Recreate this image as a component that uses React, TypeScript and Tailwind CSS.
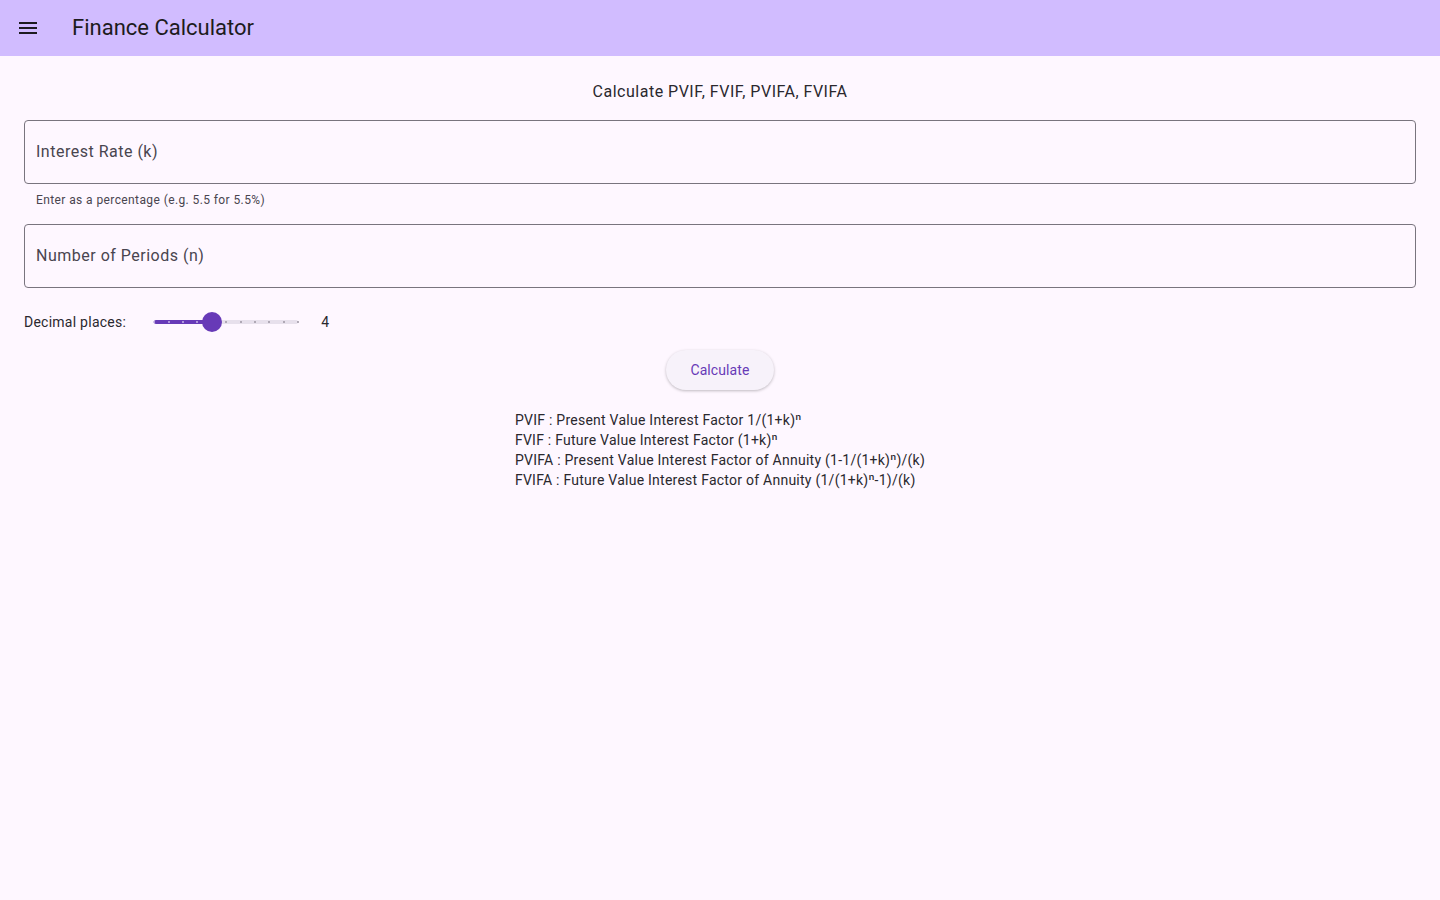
import { useState } from "react";

const formulas = [
  "PVIF : Present Value Interest Factor 1/(1+k)ⁿ",
  "FVIF : Future Value Interest Factor (1+k)ⁿ",
  "PVIFA : Present Value Interest Factor of Annuity (1-1/(1+k)ⁿ)/(k)",
  "FVIFA : Future Value Interest Factor of Annuity (1/(1+k)ⁿ-1)/(k)",
];

const Field = ({ label }: { label: string }) => (
  <div className="h-16 w-full rounded-[4px] border border-[#79747E] flex items-center px-[11px]">
    <input
      placeholder={label}
      className="w-full bg-transparent outline-none text-base tracking-[0.5px] text-[#1D1B20] placeholder:text-[#49454F]"
    />
  </div>
);

const Slider = ({ value }: { value: number }) => {
  const ticks = Array.from({ length: 11 }, (_, i) => i);
  const pct = (value / 10) * 100;
  return (
    <div className="relative w-[144px] h-5 flex items-center">
      <div className="absolute left-0 right-0 h-1 rounded-full bg-[#E7E0EC]" />
      <div className="absolute left-0 h-1 rounded-full bg-[#673AB7]" style={{ width: `${pct}%` }} />
      {ticks.map((t) => (
        <div
          key={t}
          className={
            t < value
              ? "absolute w-[2px] h-[2px] rounded-full bg-[#C5B3E6]"
              : "absolute w-[2px] h-[2px] rounded-full bg-[#9C96A3]"
          }
          style={{ left: `calc(${(t / 10) * 100}% - 1px)` }}
        />
      ))}
      <div
        className="absolute w-5 h-5 rounded-full bg-[#673AB7]"
        style={{ left: `calc(${pct}% - 10px)` }}
      />
    </div>
  );
};

const App = () => {
  const [places] = useState(4);

  return (
    <div className="min-h-screen bg-[#FEF7FF] text-[#1D1B20] font-['Roboto',sans-serif]">
      <header className="h-14 bg-[#D1BCFF] flex items-center">
        <button className="w-14 h-14 flex items-center justify-center">
          <svg width="24" height="24" viewBox="0 0 24 24" fill="#1D1B20">
            <path d="M3 18h18v-2H3v2zm0-5h18v-2H3v2zm0-7v2h18V6H3z" />
          </svg>
        </button>
        <h1 className="ml-4 text-[22px] leading-7">Finance Calculator</h1>
      </header>

      <main className="px-6 flex flex-col">
        <p className="mt-[24px] text-center text-base leading-6 tracking-[0.5px] text-[#2A282E]">
          Calculate PVIF, FVIF, PVIFA, FVIFA
        </p>

        <div className="mt-[16px]">
          <Field label="Interest Rate (k)" />
          <p className="px-3 pt-[8px] text-xs leading-4 tracking-[0.4px] text-[#49454F]">
            Enter as a percentage (e.g. 5.5 for 5.5%)
          </p>
        </div>

        <div className="mt-[16px]">
          <Field label="Number of Periods (n)" />
        </div>

        <div className="mt-6 flex items-center h-5">
          <span className="text-sm tracking-[0.25px] text-[#2A282E]">Decimal places:</span>
          <div className="ml-[28px]">
            <Slider value={places} />
          </div>
          <span className="ml-[23px] text-sm text-[#2A282E]">{places}</span>
        </div>

        <div className="mt-[18px] flex justify-center">
          <button className="h-10 px-6 rounded-full bg-[#F7F2FA] text-[#673AB7] text-sm tracking-[0.1px] shadow-[0_1px_3px_rgba(0,0,0,0.25)]">
            Calculate
          </button>
        </div>

        <div className="mt-5 flex justify-center">
          <div className="text-sm leading-5 tracking-[0.25px] text-[#2A282E]">
            {formulas.map((f) => (
              <p key={f}>{f}</p>
            ))}
          </div>
        </div>
      </main>
    </div>
  );
};

export default App;
